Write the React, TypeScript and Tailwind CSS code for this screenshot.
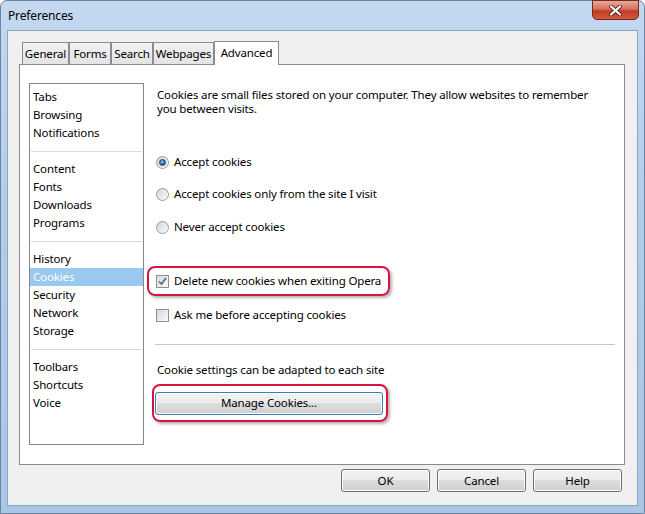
import React from 'react';

const font = { fontFamily: '"Noto Sans", "Open Sans", sans-serif' };

const groups = [
  ['Tabs', 'Browsing', 'Notifications'],
  ['Content', 'Fonts', 'Downloads', 'Programs'],
  ['History', 'Cookies', 'Security', 'Network', 'Storage'],
  ['Toolbars', 'Shortcuts', 'Voice'],
];

const tabs = [
  { label: 'General', w: 'w-[47px]' },
  { label: 'Forms', w: 'w-[42px]' },
  { label: 'Search', w: 'w-[42px]' },
  { label: 'Webpages', w: 'w-[61px]' },
];

const Radio: React.FC<{ checked?: boolean }> = ({ checked }) => (
  <span className="w-[13px] h-[13px] rounded-full border border-[#9a9a9a] bg-[linear-gradient(135deg,#d4d4d4,#fbfbfb)] flex items-center justify-center shrink-0">
    {checked && (
      <span className="w-[7px] h-[7px] rounded-full bg-[radial-gradient(circle_at_40%_35%,#8cc4ee,#1d5d9c_70%)] border border-[#173f6b]" />
    )}
  </span>
);

const Check: React.FC<{ checked?: boolean }> = ({ checked }) => (
  <span className="w-[13px] h-[13px] border border-[#8f8f8f] bg-[linear-gradient(135deg,#d8d8d8,#fbfbfb)] flex items-center justify-center shrink-0">
    {checked && (
      <svg width="9" height="9" viewBox="0 0 9 9">
        <path d="M1 4.5 L3.5 7 L8 1" stroke="#4a5f8d" strokeWidth="1.6" fill="none" />
      </svg>
    )}
  </span>
);

const Button: React.FC<{ label: string; className?: string }> = ({ label, className = '' }) => (
  <div
    className={`h-[23px] border border-[#707070] rounded-[3px] flex items-center justify-center text-black bg-[linear-gradient(to_bottom,#f2f2f2_0%,#ebebeb_50%,#dddddd_50%,#cfcfcf_100%)] shadow-[inset_0_0_0_1px_#fbfbfb] whitespace-nowrap ${className}`}
  >
    {label}
  </div>
);

export default function App() {
  return (
    <div
      style={font}
      className="w-[645px] h-[514px] flex flex-col border border-[#6b84a3] rounded-t-[7px] pb-[7px] bg-[linear-gradient(to_bottom,#c4d9f0_0%,#b2cceb_40%,#aac6e7_100%)] text-black text-[11.5px] tracking-[-0.15px]"
    >
      {/* title bar */}
      <div className="h-[29px] flex items-start justify-between pl-[7px]">
        <span className="mt-[6px] text-[12px]">Preferences</span>
        <div className="mr-[5px] -mt-px w-[47px] h-[20px] rounded-b-[5px] border border-[#6e2a1c] bg-[linear-gradient(to_bottom,#e9a99a_0%,#d7705a_45%,#c13b22_55%,#d25a3c_100%)] flex items-center justify-center">
          <svg width="13" height="11" viewBox="0 0 13 11">
            <path d="M2 1.5 L11 9.5 M11 1.5 L2 9.5" stroke="#5a2a22" strokeWidth="4" strokeLinecap="round" />
            <path d="M2 1.5 L11 9.5 M11 1.5 L2 9.5" stroke="#ffffff" strokeWidth="2.2" strokeLinecap="round" />
          </svg>
        </div>
      </div>

      {/* client area */}
      <div className="mx-[6px] flex-1 bg-[#f0f0f0] border border-[#8ea5c0] flex flex-col pt-[10px] pl-[11px] pb-[13px]">
        <div className="h-[23px] flex items-end pl-[3px] whitespace-nowrap">
          {tabs.map((t) => (
            <div
              key={t.label}
              className={`${t.w} h-[22px] border border-b-0 border-[#898c95] bg-[linear-gradient(to_bottom,#f2f2f2,#e3e3e3)] flex items-center justify-center`}
            >
              {t.label}
            </div>
          ))}
          <div className="relative z-10 -mb-px w-[65px] h-[24px] border border-b-0 border-[#898c95] bg-white flex items-center justify-center pb-[2px]">
            Advanced
          </div>
        </div>

        {/* tab panel */}
        <div className="w-[606px] h-[401px] border border-[#898c95] bg-white flex pt-[18px] pl-[9px] whitespace-nowrap">
          <div className="w-[115px] h-[362px] border border-[#828790] pt-[4px] flex flex-col">
            {groups.map((g, gi) => (
              <div key={gi}>
                {gi > 0 && (
                  <div className="h-[18px] flex items-center px-px">
                    <div className="w-full h-px bg-[#d9d9d9]" />
                  </div>
                )}
                {g.map((item) => (
                  <div
                    key={item}
                    className={`h-[18px] leading-[18px] px-[3px] ${item === 'Cookies' ? 'bg-[#99c9ef] text-white' : ''}`}
                  >
                    {item}
                  </div>
                ))}
              </div>
            ))}
          </div>

          <div className="ml-[12px] flex flex-col">
            <p className="mt-[5px] leading-[14px] pl-px">
              Cookies are small files stored on your computer. They allow websites to remember
              <br />
              you between visits.
            </p>

            <div className="mt-[37px] h-[18px] flex items-center gap-[5px]">
              <Radio checked />
              <span>Accept cookies</span>
            </div>
            <div className="mt-[14px] h-[18px] flex items-center gap-[5px]">
              <Radio />
              <span>Accept cookies only from the site I visit</span>
            </div>
            <div className="mt-[15px] h-[18px] flex items-center gap-[5px]">
              <Radio />
              <span>Never accept cookies</span>
            </div>

            <div className="mt-[30px] -ml-[9px] w-[243px] h-[30px] border-2 border-[#d9123f] rounded-[8px] pl-[7px] flex items-center gap-[5px] shadow-[2px_2px_3px_rgba(0,0,0,0.3)]">
              <Check checked />
              <span>Delete new cookies when exiting Opera</span>
            </div>
            <div className="mt-[10px] h-[18px] flex items-center gap-[5px]">
              <Check />
              <span>Ask me before accepting cookies</span>
            </div>

            <div className="mt-[20px] -ml-px w-[460px] h-px bg-[#c6c6c6]" />

            <div className="mt-[16px] h-[18px] leading-[18px] pl-px">Cookie settings can be adapted to each site</div>

            <div className="mt-[5px] -ml-[4px] w-[236px] h-[38px] border-2 border-[#d9123f] rounded-[8px] pl-px flex items-center shadow-[2px_2px_3px_rgba(0,0,0,0.3)]">
              <Button
                label="Manage Cookies..."
                className="w-[228px] !border-[#3c7fb1] shadow-[inset_0_0_0_1px_#9fd6f2]"
              />
            </div>
          </div>
        </div>

        {/* bottom buttons */}
        <div className="mt-[4px] flex justify-end gap-[7px] pr-[15px]">
          <Button label="OK" className="w-[89px]" />
          <Button label="Cancel" className="w-[89px]" />
          <Button label="Help" className="w-[89px]" />
        </div>
      </div>
    </div>
  );
}
